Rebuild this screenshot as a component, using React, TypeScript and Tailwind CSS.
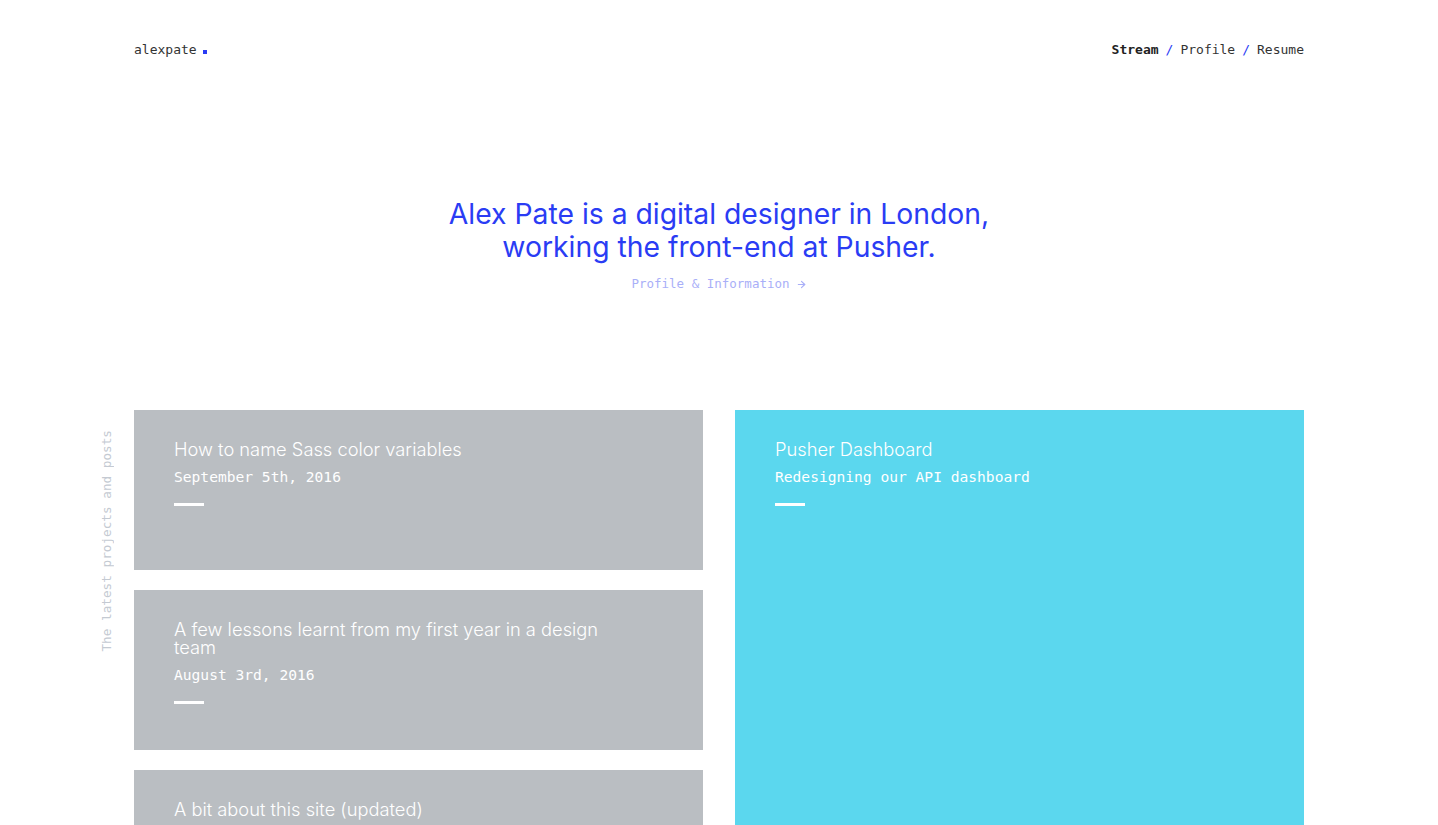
import { ArrowRight } from "lucide-react";

const mono = "font-['DejaVu_Sans_Mono','Liberation_Mono',monospace]";
const sans = "font-['Inter','Liberation_Sans',sans-serif]";

type Post = { title: string; sub: string };

const posts: Post[] = [
  { title: "How to name Sass color variables", sub: "September 5th, 2016" },
  {
    title: "A few lessons learnt from my first year in a design team",
    sub: "August 3rd, 2016",
  },
  { title: "A bit about this site (updated)", sub: "July 12th, 2016" },
];

function Card({ post, tall, color }: { post: Post; tall?: boolean; color: string }) {
  return (
    <div className={`${color} ${tall ? "h-[560px]" : "h-[160px]"} px-10 pt-[30px] text-white`}>
      <h3 className={`${sans} max-w-[450px] text-[18.3px] leading-[18px] font-light`}>{post.title}</h3>
      <p className={`${mono} mt-[9px] text-[14.6px] leading-[20px]`}>{post.sub}</p>
      <div className="mt-[16px] h-[3px] w-[30px] bg-white" />
    </div>
  );
}

export default function App() {
  return (
    <div className="min-h-[825px] bg-white">
      <div className="mx-auto w-[1170px]">
        <header className={`${mono} flex items-center justify-between pt-[41px] text-[13px] leading-[18px] text-[#333]`}>
          <div className="flex items-center">
            alexpate
            <span className="ml-[6px] mt-[4px] h-[4px] w-[4px] bg-[#2a3cf4]" />
          </div>
          <nav className="flex items-center gap-[7px]">
            <span className="font-bold text-[#222]">Stream</span>
            <span className="text-[#2a3cf4]">/</span>
            <span>Profile</span>
            <span className="text-[#2a3cf4]">/</span>
            <span>Resume</span>
          </nav>
        </header>

        <section className="flex flex-col items-center pt-[139px] text-center">
          <h1 className={`${sans} text-[28.3px] leading-[33px] text-[#2a3cf4]`}>
            Alex Pate is a digital designer in London,
            <br />
            working the front-end at Pusher.
          </h1>
          <a className={`${mono} mt-[11px] flex items-center gap-[6px] text-[12.5px] text-[#a9aff8]`}>
            Profile &amp; Information
            <ArrowRight size={11} strokeWidth={2.5} />
          </a>
        </section>

        <section className="relative mt-[116px] grid grid-cols-2 gap-8">
          <div className="absolute right-full top-[20px] mr-[20px]">
            <span
              className={`${mono} block rotate-180 text-[12.7px] leading-[14px] text-[#c4cad2] [writing-mode:vertical-rl]`}
            >
              The latest projects and posts
            </span>
          </div>
          <div className="flex flex-col gap-5">
            {posts.map((p) => (
              <Card key={p.title} post={p} color="bg-[#babec2]" />
            ))}
          </div>
          <div>
            <Card
              tall
              post={{ title: "Pusher Dashboard", sub: "Redesigning our API dashboard" }}
              color="bg-[#5bd7ee]"
            />
          </div>
        </section>
      </div>
    </div>
  );
}
